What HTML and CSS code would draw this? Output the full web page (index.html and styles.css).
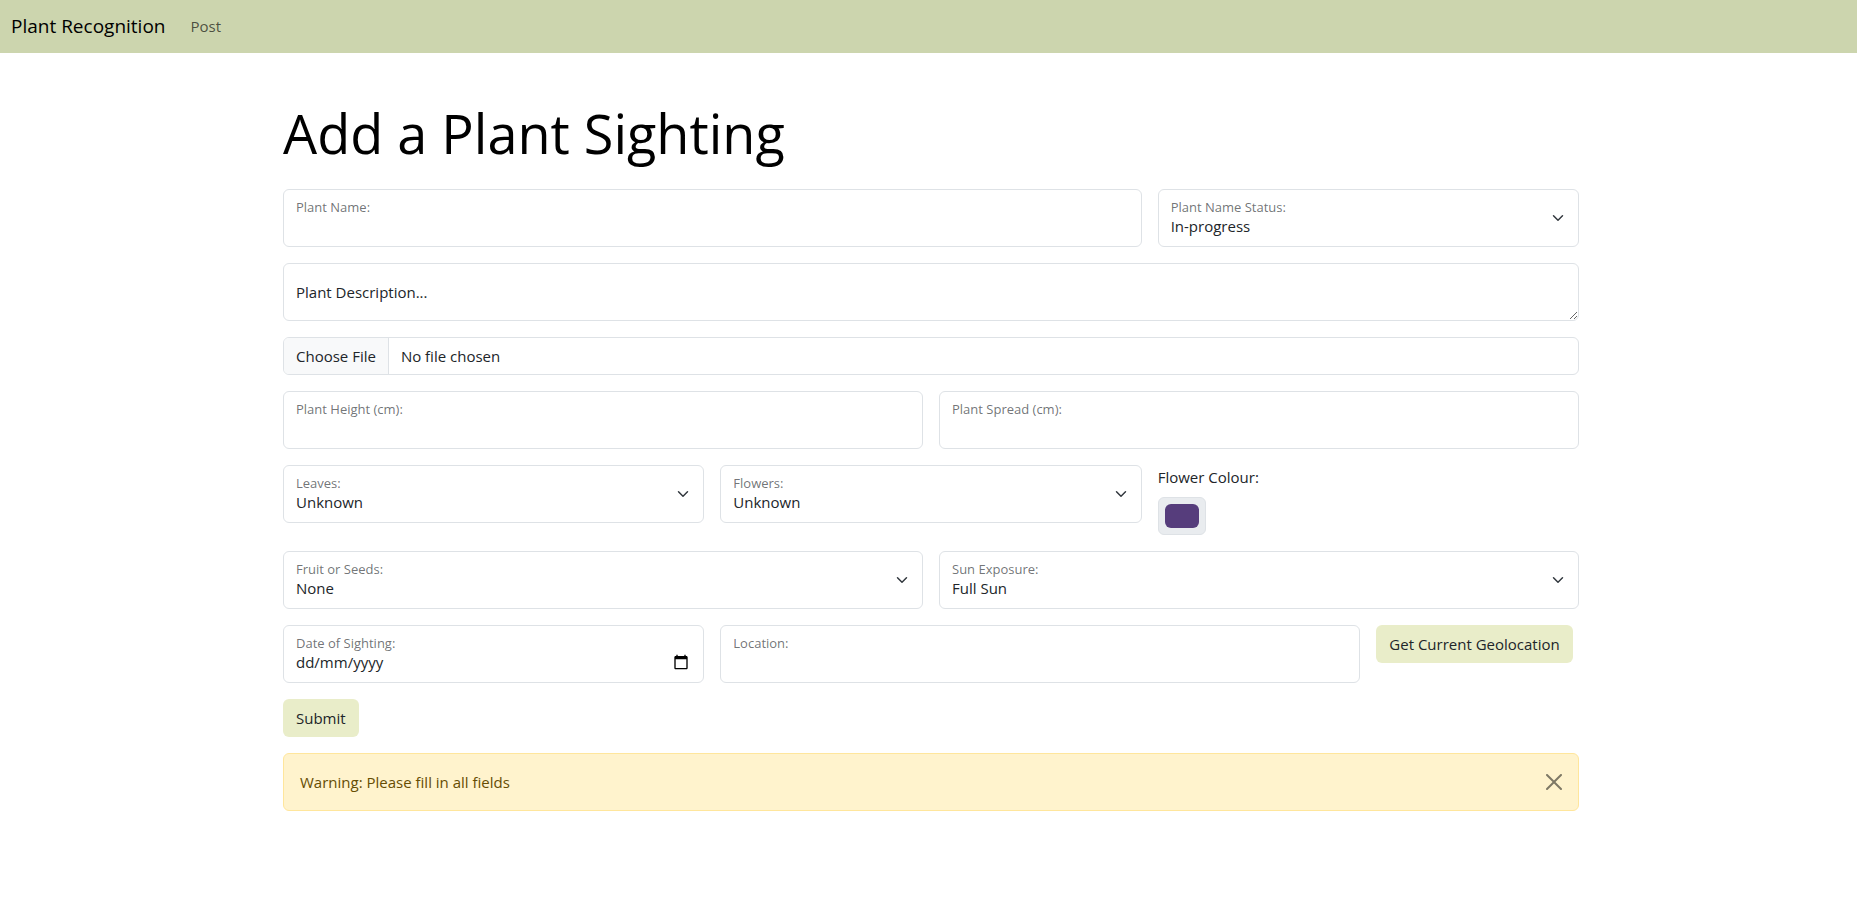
FILE: index.html
```html
<!DOCTYPE html>
<html lang="en-GB">
<head>
  <meta charset="utf-8">
  <meta name="viewport" content="width=device-width, initial-scale=1">
  <title>Plant Recognition</title>
  <link rel="stylesheet" href="styles.css">
</head>
<body>
  <nav class="navbar">
    <a class="brand" href="#">Plant Recognition</a>
    <a class="nav-link" href="#">Post</a>
  </nav>
  <main class="container">
    <h1 class="title">Add a Plant Sighting</h1>
    <form class="form">
      <div class="field span-8">
        <input class="control" type="text" id="name">
        <label class="label" for="name">Plant Name:</label>
      </div>
      <div class="field span-4">
        <select class="control select" id="status"><option>In-progress</option><option>Completed</option></select>
        <label class="label" for="status">Plant Name Status:</label>
      </div>

      <textarea class="control description span-12" rows="1" aria-label="Plant Description" placeholder="Plant Description..."></textarea>

      <input class="file span-12" type="file" aria-label="Plant photo">

      <div class="field span-6">
        <input class="control" type="text" id="height">
        <label class="label" for="height">Plant Height (cm):</label>
      </div>
      <div class="field span-6">
        <input class="control" type="text" id="spread">
        <label class="label" for="spread">Plant Spread (cm):</label>
      </div>

      <div class="field span-4">
        <select class="control select" id="leaves"><option>Unknown</option><option>Yes</option><option>No</option></select>
        <label class="label" for="leaves">Leaves:</label>
      </div>
      <div class="field span-4">
        <select class="control select" id="flowers"><option>Unknown</option><option>Yes</option><option>No</option></select>
        <label class="label" for="flowers">Flowers:</label>
      </div>
      <div class="colour-field span-4">
        <label for="colour">Flower Colour:</label>
        <input class="colour" type="color" id="colour" value="#563d7c">
      </div>

      <div class="field span-6">
        <select class="control select" id="fruit"><option>None</option><option>Fruit</option><option>Seeds</option></select>
        <label class="label" for="fruit">Fruit or Seeds:</label>
      </div>
      <div class="field span-6">
        <select class="control select" id="sun"><option>Full Sun</option><option>Partial Sun</option><option>Shade</option></select>
        <label class="label" for="sun">Sun Exposure:</label>
      </div>

      <div class="field span-4">
        <input class="control date" type="text" inputmode="numeric" id="date" placeholder="dd/mm/yyyy">
        <label class="label" for="date">Date of Sighting:</label>
        <button class="calendar" type="button" aria-label="Show date picker">
          <svg viewBox="0 0 24 24" width="16" height="16"><path d="M20 3h-1V1h-2v2H7V1H5v2H4c-1.100 0-2 .9-2 2v16c0 1.100.9 2 2 2h16c1.100 0 2-.9 2-2V5c0-1.100-.9-2-2-2zm0 18H4V8h16v13z"/></svg>
        </button>
      </div>
      <div class="field span-6">
        <input class="control" type="text" id="location">
        <label class="label" for="location">Location:</label>
      </div>
      <button class="btn span-2" type="button">Get Current Geolocation</button>

      <button class="btn span-12" type="submit">Submit</button>

      <div class="alert span-12" role="alert">
        <span>Warning: Please fill in all fields</span>
        <button class="close" type="button" aria-label="Close">
          <svg viewBox="0 0 16 16" width="16" height="16"><path d="M.293.293a1 1 0 0 1 1.414 0L8 6.586 14.293.293a1 1 0 1 1 1.414 1.414L9.414 8l6.293 6.293a1 1 0 0 1-1.414 1.414L8 9.414l-6.293 6.293a1 1 0 0 1-1.414-1.414L6.586 8 .293 1.707a1 1 0 0 1 0-1.414z"/></svg>
        </button>
      </div>
    </form>
  </main>
</body>
</html>
```
FILE: styles.css
```css
* {
  box-sizing: border-box;
}

body {
  margin: 0;
  background: #fff;
  color: #212529;
  font: 15px/24px "Segoe UI", "Open Sans", "Noto Sans", sans-serif;
}

input,
select,
textarea,
button {
  margin: 0;
  color: inherit;
  font: inherit;
}

.navbar {
  display: flex;
  align-items: center;
  gap: 25px;
  height: 53px;
  padding: 0 11px 2px;
  background: #ccd5ae;
}

.brand {
  color: #000;
  font-size: 19px;
  text-decoration: none;
}

.nav-link {
  color: rgba(0, 0, 0, .65);
  text-decoration: none;
}

.container {
  max-width: 1325px;
  margin: 0 auto;
  padding: 46px 12px 24px 17px;
}

.title {
  margin: 0 0 22px;
  color: #000;
  font-size: 54px;
  font-weight: 400;
  line-height: 68px;
}

.form {
  display: grid;
  grid-template-columns: repeat(12, minmax(0, 1fr));
  gap: 16px;
  align-items: start;
}

.span-2 { grid-column: span 2; }
.span-4 { grid-column: span 4; }
.span-6 { grid-column: span 6; }
.span-8 { grid-column: span 8; }
.span-12 { grid-column: span 12; }

.field {
  display: grid;
}

.field > * {
  grid-area: 1 / 1;
}

.label {
  align-self: start;
  justify-self: start;
  padding: 7px 13px;
  color: rgba(33, 37, 41, .65);
  font-size: 13px;
  line-height: 22px;
  pointer-events: none;
}

.control {
  width: 100%;
  height: 58px;
  padding: 25px 12px 9px;
  border: 1px solid #dee2e6;
  border-radius: 6px;
  background: #fff;
  line-height: 22px;
}

.select {
  padding-right: 36px;
  appearance: none;
  background: #fff url("data:image/svg+xml,%3csvg xmlns='http://www.w3.org/2000/svg' viewBox='0 0 16 16'%3e%3cpath fill='none' stroke='%23343a40' stroke-linecap='round' stroke-linejoin='round' stroke-width='2' d='m2 5 6 6 6-6'/%3e%3c/svg%3e") no-repeat right 14px center / 12px 12px;
}

.description {
  display: block;
  min-height: 58px;
  padding: 17px 12px;
  resize: vertical;
}

.description::placeholder,
.date::placeholder {
  color: #212529;
  opacity: 1;
}

.calendar {
  align-self: end;
  justify-self: end;
  display: flex;
  margin: 0 15px 13px;
  padding: 0;
  border: 0;
  background: none;
  color: #000;
}

.file {
  width: 100%;
  height: 38px;
  padding: 6px 12px;
  overflow: hidden;
  border: 1px solid #dee2e6;
  border-radius: 6px;
}

.file::file-selector-button {
  margin: -6px 12px -6px -12px;
  padding: 6px 12px;
  border: 0 solid #dee2e6;
  border-right-width: 1px;
  background: #f8f9fa;
  color: #212529;
  font: inherit;
}

.colour-field {
  display: grid;
  justify-items: start;
  gap: 8px;
}

.colour {
  width: 48px;
  height: 38px;
  padding: 6px;
  border: 1px solid #dee2e6;
  border-radius: 6px;
  background: #e9ecef;
}

.colour::-webkit-color-swatch-wrapper {
  padding: 0;
}

.colour::-webkit-color-swatch {
  border: 0;
  border-radius: 6px;
}

.btn {
  justify-self: start;
  height: 38px;
  padding: 0 13px;
  border: 0;
  border-radius: 6px;
  background: #e9edc9;
  white-space: nowrap;
}

.alert {
  display: flex;
  align-items: center;
  justify-content: space-between;
  min-height: 58px;
  padding: 0 16px;
  border: 1px solid #ffe69c;
  border-radius: 6px;
  background: #fff3cd;
  color: #664d03;
}

.close {
  display: flex;
  padding: 0;
  border: 0;
  background: none;
  color: #000;
  opacity: .5;
}
```
